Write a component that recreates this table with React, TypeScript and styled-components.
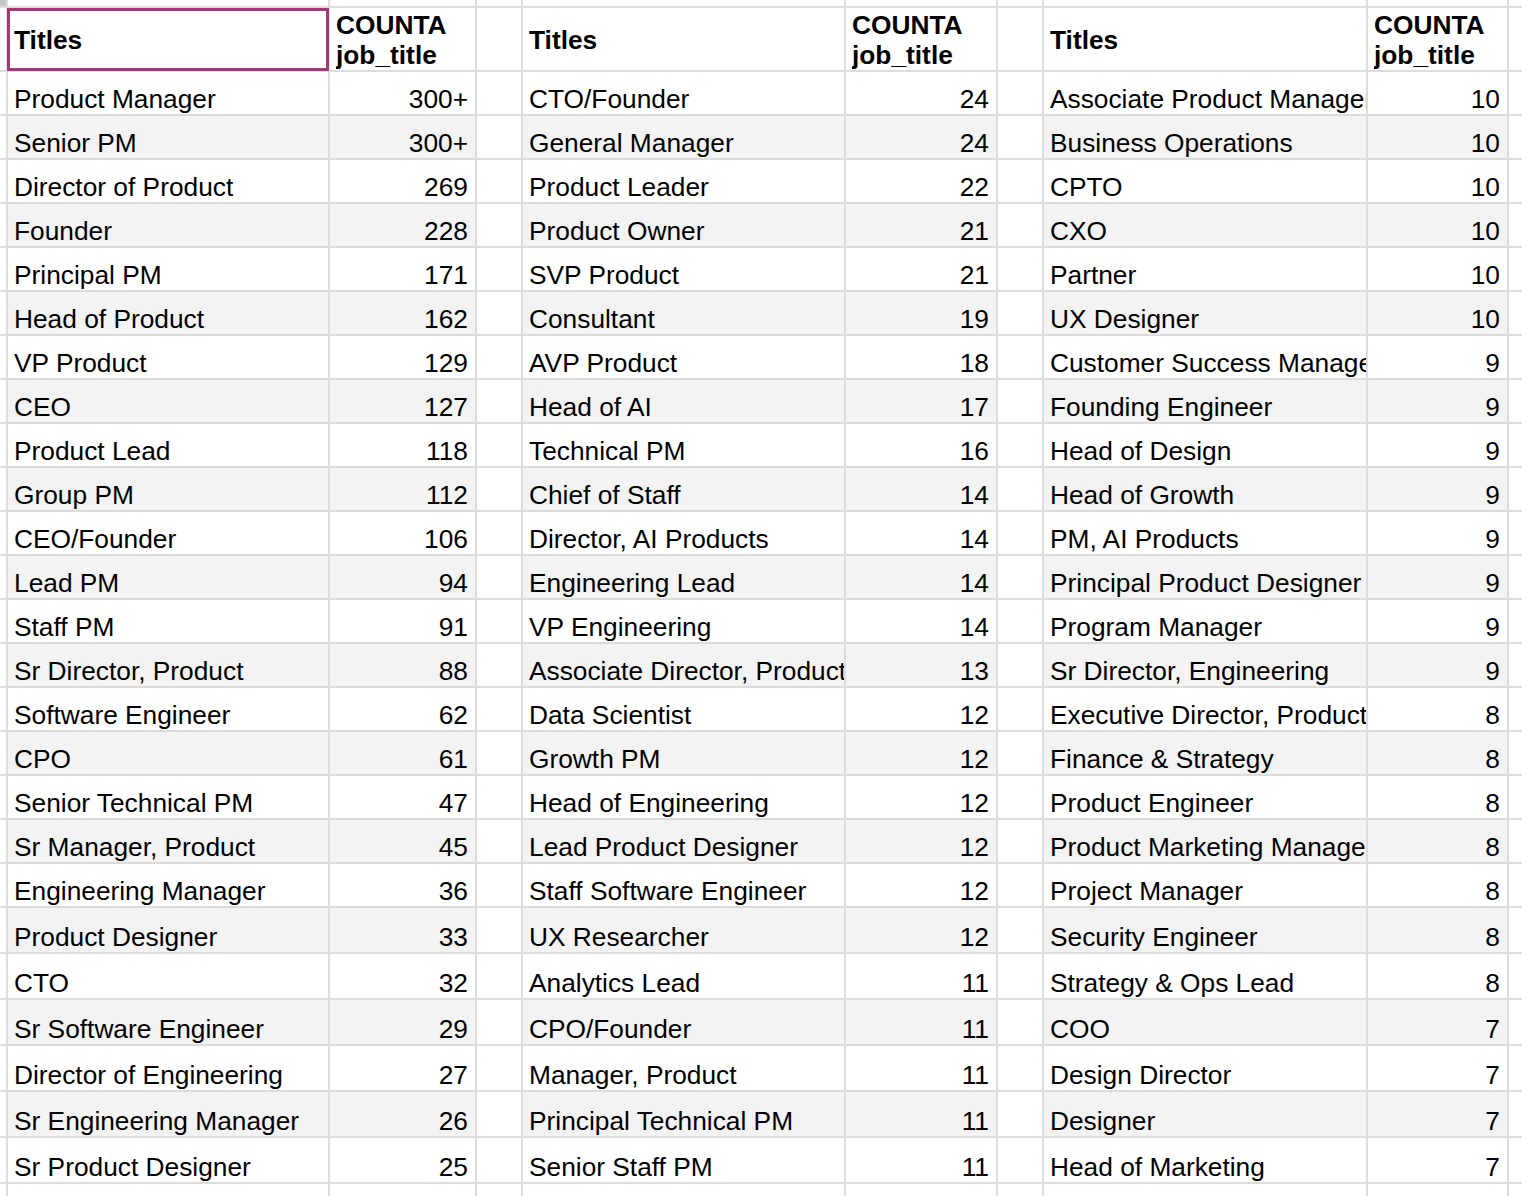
import React from 'react'
import styled, { createGlobalStyle } from 'styled-components'

type Row = [string, string]

const groups: Row[][] = [
  [
    ['Product Manager', '300+'],
    ['Senior PM', '300+'],
    ['Director of Product', '269'],
    ['Founder', '228'],
    ['Principal PM', '171'],
    ['Head of Product', '162'],
    ['VP Product', '129'],
    ['CEO', '127'],
    ['Product Lead', '118'],
    ['Group PM', '112'],
    ['CEO/Founder', '106'],
    ['Lead PM', '94'],
    ['Staff PM', '91'],
    ['Sr Director, Product', '88'],
    ['Software Engineer', '62'],
    ['CPO', '61'],
    ['Senior Technical PM', '47'],
    ['Sr Manager, Product', '45'],
    ['Engineering Manager', '36'],
    ['Product Designer', '33'],
    ['CTO', '32'],
    ['Sr Software Engineer', '29'],
    ['Director of Engineering', '27'],
    ['Sr Engineering Manager', '26'],
    ['Sr Product Designer', '25'],
  ],
  [
    ['CTO/Founder', '24'],
    ['General Manager', '24'],
    ['Product Leader', '22'],
    ['Product Owner', '21'],
    ['SVP Product', '21'],
    ['Consultant', '19'],
    ['AVP Product', '18'],
    ['Head of AI', '17'],
    ['Technical PM', '16'],
    ['Chief of Staff', '14'],
    ['Director, AI Products', '14'],
    ['Engineering Lead', '14'],
    ['VP Engineering', '14'],
    ['Associate Director, Product', '13'],
    ['Data Scientist', '12'],
    ['Growth PM', '12'],
    ['Head of Engineering', '12'],
    ['Lead Product Designer', '12'],
    ['Staff Software Engineer', '12'],
    ['UX Researcher', '12'],
    ['Analytics Lead', '11'],
    ['CPO/Founder', '11'],
    ['Manager, Product', '11'],
    ['Principal Technical PM', '11'],
    ['Senior Staff PM', '11'],
  ],
  [
    ['Associate Product Manager', '10'],
    ['Business Operations', '10'],
    ['CPTO', '10'],
    ['CXO', '10'],
    ['Partner', '10'],
    ['UX Designer', '10'],
    ['Customer Success Manager', '9'],
    ['Founding Engineer', '9'],
    ['Head of Design', '9'],
    ['Head of Growth', '9'],
    ['PM, AI Products', '9'],
    ['Principal Product Designer', '9'],
    ['Program Manager', '9'],
    ['Sr Director, Engineering', '9'],
    ['Executive Director, Product', '8'],
    ['Finance & Strategy', '8'],
    ['Product Engineer', '8'],
    ['Product Marketing Manager', '8'],
    ['Project Manager', '8'],
    ['Security Engineer', '8'],
    ['Strategy & Ops Lead', '8'],
    ['COO', '7'],
    ['Design Director', '7'],
    ['Designer', '7'],
    ['Head of Marketing', '7'],
  ],
]

const GlobalStyle = createGlobalStyle`
  html, body {
    margin: 0;
    padding: 0;
    background: #fff;
    overflow: hidden;
  }
  body {
    font-family: "Liberation Sans", Arial, sans-serif;
    color: #000;
  }
`

const Sheet = styled.div`
  display: grid;
  grid-template-columns: 8px 322px 147px 46px 323px 152px 46px 324px 141px 20px;
  grid-template-rows: 8px 64px repeat(19, 44px) repeat(6, 46px) 40px;
  width: 1529px;
  font-size: 26.3px;
`

const Cell = styled.div<{ $striped?: boolean }>`
  box-sizing: border-box;
  border-right: 2px solid #dcdcdc;
  border-bottom: 2px solid #dcdcdc;
  background: ${(p) => (p.$striped ? '#f3f3f3' : '#fff')};
  overflow: hidden;
  white-space: nowrap;
`

const Blank = styled(Cell)<{ $corner?: boolean }>`
  background: ${(p) => (p.$corner ? '#c4c4c4' : '#fff')};
`

const DataCell = styled(Cell)<{ $right?: boolean }>`
  display: flex;
  align-items: flex-end;
  justify-content: ${(p) => (p.$right ? 'flex-end' : 'flex-start')};
  padding: 0 7px 0 6px;
  line-height: 30px;
`

const HeadCell = styled(Cell)<{ $selected?: boolean }>`
  position: relative;
  display: flex;
  align-items: center;
  padding: 2px 7px 0 6px;
  font-weight: 700;
  line-height: 30.5px;
  overflow: visible;

  ${(p) =>
    p.$selected &&
    `
    &::after {
      content: '';
      position: absolute;
      left: -1px;
      top: 0;
      right: -1px;
      bottom: -1px;
      border: 3px solid #a43a74;
    }
  `}
`

const HeadLabel = styled.div`
  overflow: hidden;
`

export default function App() {
  const rowCount = groups[0].length

  // thin strip of the row above the header, with the sheet corner
  const topRow = (
    <>
      <Blank $corner />
      {Array.from({ length: 9 }).map((_, i) => (
        <Blank key={'t' + i} />
      ))}
    </>
  )

  const header = (
    <>
      <Blank />
      {groups.map((_, g) => (
        <React.Fragment key={'h' + g}>
          <HeadCell $selected={g === 0}>
            <HeadLabel>Titles</HeadLabel>
          </HeadCell>
          <HeadCell>
            <HeadLabel>
              COUNTA
              <br />
              job_title
            </HeadLabel>
          </HeadCell>
          <Blank />
        </React.Fragment>
      ))}
    </>
  )

  const body = Array.from({ length: rowCount }).map((_, r) => (
    <React.Fragment key={'r' + r}>
      <Blank />
      {groups.map((rows, g) => (
        <React.Fragment key={g}>
          <DataCell $striped={r % 2 === 1}>{rows[r][0]}</DataCell>
          <DataCell $striped={r % 2 === 1} $right>
            {rows[r][1]}
          </DataCell>
          <Blank />
        </React.Fragment>
      ))}
    </React.Fragment>
  ))

  const bottomRow = Array.from({ length: 10 }).map((_, i) => <Blank key={'b' + i} />)

  return (
    <>
      <GlobalStyle />
      <Sheet>
        {topRow}
        {header}
        {body}
        {bottomRow}
      </Sheet>
    </>
  )
}
